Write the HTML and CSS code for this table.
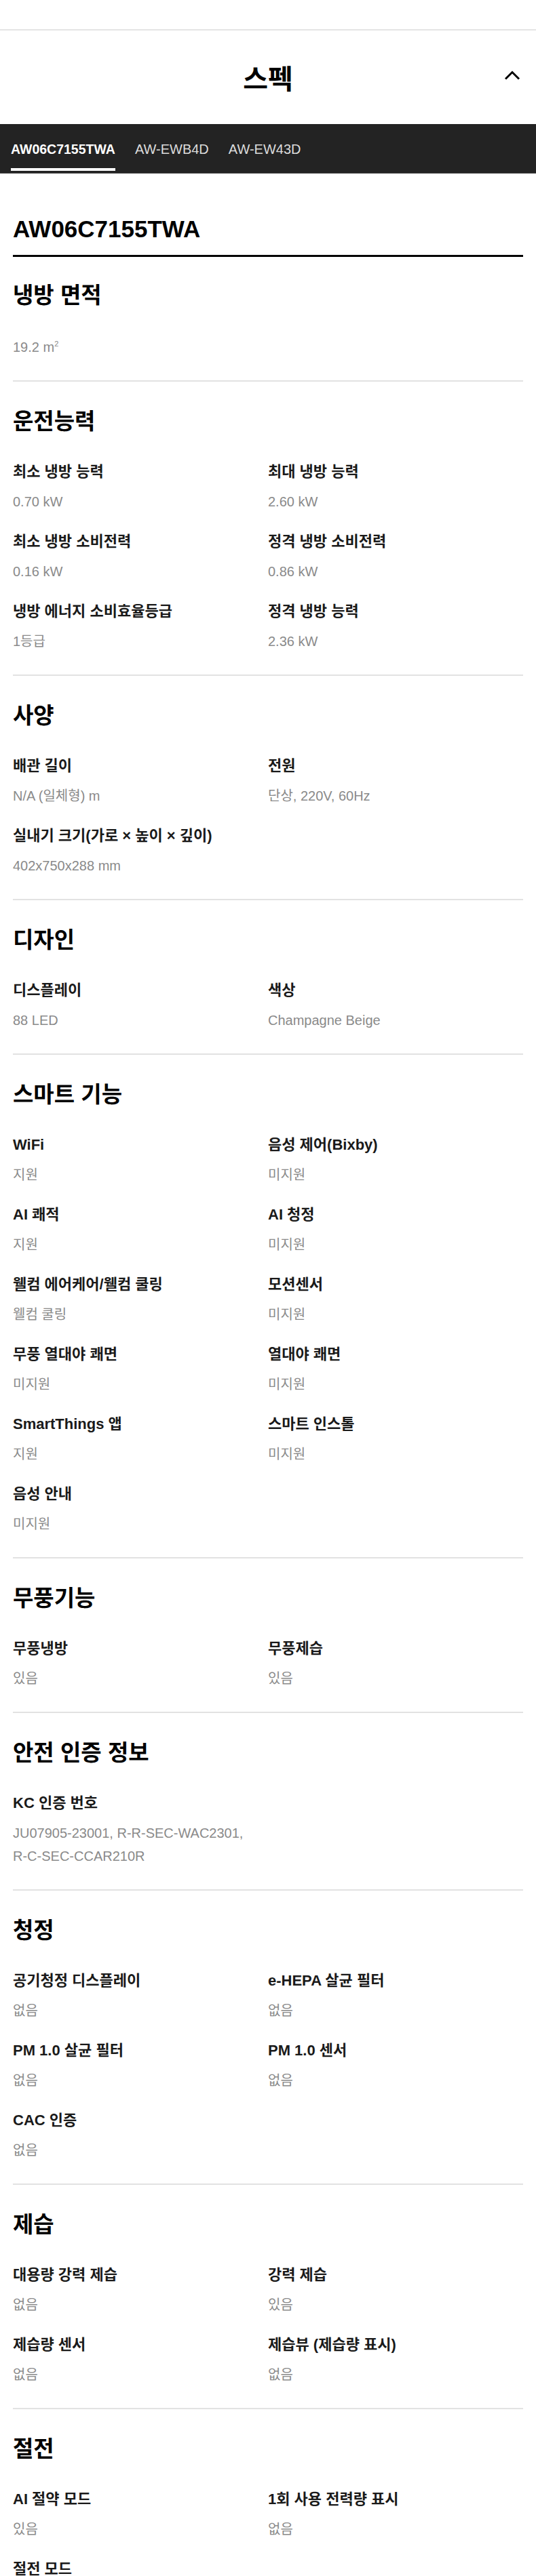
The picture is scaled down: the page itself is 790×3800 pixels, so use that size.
FILE: index.html
```html
<!DOCTYPE html>
<html lang="ko">
<head>
<meta charset="utf-8">
<title>스펙</title>
<link rel="stylesheet" href="styles.css">
</head>
<body>
<div class="page">
  <div class="top-space"></div>
  <header class="spec-header">
    <h2 class="spec-header__title">스펙</h2>
    <button class="spec-header__toggle" type="button" aria-label="접기">
      <svg width="24" height="14" viewBox="0 0 24 14"><polyline points="2,12.5 12,2.5 22,12.5" fill="none" stroke="#000" stroke-width="3"/></svg>
    </button>
  </header>
  <nav class="model-tabs">
    <a class="model-tab model-tab--active">AW06C7155TWA</a>
    <a class="model-tab">AW-EWB4D</a>
    <a class="model-tab">AW-EW43D</a>
  </nav>
  <main class="spec-body">
    <h3 class="model-name">AW06C7155TWA</h3>

    <section class="spec-group spec-group--first">
      <h4 class="group-title">냉방 면적</h4>
      <p class="spec-solo">19.2 m<sup class="sup">2</sup></p>
    </section>

    <section class="spec-group">
      <h4 class="group-title">운전능력</h4>
      <dl class="spec-grid">
        <div class="spec-item"><dt>최소 냉방 능력</dt><dd>0.70 kW</dd></div>
        <div class="spec-item"><dt>최대 냉방 능력</dt><dd>2.60 kW</dd></div>
        <div class="spec-item"><dt>최소 냉방 소비전력</dt><dd>0.16 kW</dd></div>
        <div class="spec-item"><dt>정격 냉방 소비전력</dt><dd>0.86 kW</dd></div>
        <div class="spec-item"><dt>냉방 에너지 소비효율등급</dt><dd>1등급</dd></div>
        <div class="spec-item"><dt>정격 냉방 능력</dt><dd>2.36 kW</dd></div>
      </dl>
    </section>

    <section class="spec-group">
      <h4 class="group-title">사양</h4>
      <dl class="spec-grid">
        <div class="spec-item"><dt>배관 길이</dt><dd>N/A (일체형) m</dd></div>
        <div class="spec-item"><dt>전원</dt><dd>단상, 220V, 60Hz</dd></div>
        <div class="spec-item"><dt>실내기 크기(가로 × 높이 × 깊이)</dt><dd>402x750x288 mm</dd></div>
      </dl>
    </section>

    <section class="spec-group">
      <h4 class="group-title">디자인</h4>
      <dl class="spec-grid">
        <div class="spec-item"><dt>디스플레이</dt><dd>88 LED</dd></div>
        <div class="spec-item"><dt>색상</dt><dd>Champagne Beige</dd></div>
      </dl>
    </section>

    <section class="spec-group">
      <h4 class="group-title">스마트 기능</h4>
      <dl class="spec-grid">
        <div class="spec-item"><dt>WiFi</dt><dd>지원</dd></div>
        <div class="spec-item"><dt>음성 제어(Bixby)</dt><dd>미지원</dd></div>
        <div class="spec-item"><dt>AI 쾌적</dt><dd>지원</dd></div>
        <div class="spec-item"><dt>AI 청정</dt><dd>미지원</dd></div>
        <div class="spec-item"><dt>웰컴 에어케어/웰컴 쿨링</dt><dd>웰컴 쿨링</dd></div>
        <div class="spec-item"><dt>모션센서</dt><dd>미지원</dd></div>
        <div class="spec-item"><dt>무풍 열대야 쾌면</dt><dd>미지원</dd></div>
        <div class="spec-item"><dt>열대야 쾌면</dt><dd>미지원</dd></div>
        <div class="spec-item"><dt>SmartThings 앱</dt><dd>지원</dd></div>
        <div class="spec-item"><dt>스마트 인스톨</dt><dd>미지원</dd></div>
        <div class="spec-item"><dt>음성 안내</dt><dd>미지원</dd></div>
      </dl>
    </section>

    <section class="spec-group">
      <h4 class="group-title">무풍기능</h4>
      <dl class="spec-grid">
        <div class="spec-item"><dt>무풍냉방</dt><dd>있음</dd></div>
        <div class="spec-item"><dt>무풍제습</dt><dd>있음</dd></div>
      </dl>
    </section>

    <section class="spec-group">
      <h4 class="group-title">안전 인증 정보</h4>
      <dl class="spec-grid">
        <div class="spec-item"><dt>KC 인증 번호</dt><dd>JU07905-23001, R-R-SEC-WAC2301,<br>R-C-SEC-CCAR210R</dd></div>
      </dl>
    </section>

    <section class="spec-group">
      <h4 class="group-title">청정</h4>
      <dl class="spec-grid">
        <div class="spec-item"><dt>공기청정 디스플레이</dt><dd>없음</dd></div>
        <div class="spec-item"><dt>e-HEPA 살균 필터</dt><dd>없음</dd></div>
        <div class="spec-item"><dt>PM 1.0 살균 필터</dt><dd>없음</dd></div>
        <div class="spec-item"><dt>PM 1.0 센서</dt><dd>없음</dd></div>
        <div class="spec-item"><dt>CAC 인증</dt><dd>없음</dd></div>
      </dl>
    </section>

    <section class="spec-group">
      <h4 class="group-title">제습</h4>
      <dl class="spec-grid">
        <div class="spec-item"><dt>대용량 강력 제습</dt><dd>없음</dd></div>
        <div class="spec-item"><dt>강력 제습</dt><dd>있음</dd></div>
        <div class="spec-item"><dt>제습량 센서</dt><dd>없음</dd></div>
        <div class="spec-item"><dt>제습뷰 (제습량 표시)</dt><dd>없음</dd></div>
      </dl>
    </section>

    <section class="spec-group">
      <h4 class="group-title">절전</h4>
      <dl class="spec-grid">
        <div class="spec-item"><dt>AI 절약 모드</dt><dd>있음</dd></div>
        <div class="spec-item"><dt>1회 사용 전력량 표시</dt><dd>없음</dd></div>
        <div class="spec-item"><dt>절전 모드</dt></div>
      </dl>
    </section>
  </main>
</div>
</body>
</html>
```

FILE: styles.css
```css
* {
  box-sizing: border-box;
}

body {
  margin: 0;
  background: #ffffff;
  color: #000000;
  font-family: "Noto Sans CJK KR", "Noto Sans", sans-serif;
}

.top-space {
  height: 45px;
  border-bottom: 2px solid #e4e4e4;
}

.spec-header {
  height: 138px;
  display: grid;
  grid-template-columns: 1fr auto 1fr;
  align-items: center;
  padding: 0 23px;
}

.spec-header__title {
  grid-column: 2;
  margin: 0;
  font-size: 40px;
  line-height: 48px;
  font-weight: 700;
}

.spec-header__toggle {
  grid-column: 3;
  justify-self: end;
  display: flex;
  width: 24px;
  height: 14px;
  margin-top: -6px;
  padding: 0;
  border: 0;
  background: none;
}

.model-tabs {
  height: 73px;
  display: flex;
  align-items: flex-start;
  gap: 29px;
  padding: 0 16px;
  background: #232323;
  border-bottom: 1px solid #444444;
}

.model-tab {
  padding: 25px 0 16px;
  border-bottom: 4px solid transparent;
  font-family: "Liberation Sans", "Noto Sans CJK KR", sans-serif;
  font-size: 20px;
  line-height: 24px;
  color: #dcdcdc;
}

.model-tab--active {
  color: #ffffff;
  font-size: 19.5px;
  font-weight: 700;
  border-bottom-color: #ffffff;
}

.spec-body {
  padding: 0 19px;
}

.model-name {
  margin: 62px 0 0;
  padding-bottom: 18px;
  border-bottom: 3px solid #000000;
  font-family: "Liberation Sans", "Noto Sans CJK KR", sans-serif;
  font-size: 35px;
  line-height: 40px;
  font-weight: 700;
}

.spec-group {
  padding: 34px 0 32px;
  border-top: 2px solid #e2e2e2;
}

.spec-group--first {
  border-top: 0;
  padding-top: 32px;
  padding-bottom: 32px;
}

.group-title {
  margin: 0;
  font-size: 33px;
  line-height: 44px;
  font-weight: 700;
}

.spec-grid {
  display: grid;
  grid-template-columns: 1fr 1fr;
  row-gap: 28px;
  margin: 41px 0 0;
}

.spec-item dt {
  font-family: "Liberation Sans", "Noto Sans CJK KR", sans-serif;
  font-size: 22px;
  line-height: 28px;
  font-weight: 700;
  color: #1a1a1a;
}

.spec-item dd,
.spec-solo {
  margin: 13px 0 0;
  font-family: "Liberation Sans", "Noto Sans CJK KR", sans-serif;
  font-size: 20px;
  line-height: 34px;
  color: #8a8a8a;
}

.spec-solo {
  margin-top: 40px;
  margin-bottom: 0;
}

.sup {
  font-size: 11px;
  vertical-align: 8px;
  line-height: 0;
}
```
